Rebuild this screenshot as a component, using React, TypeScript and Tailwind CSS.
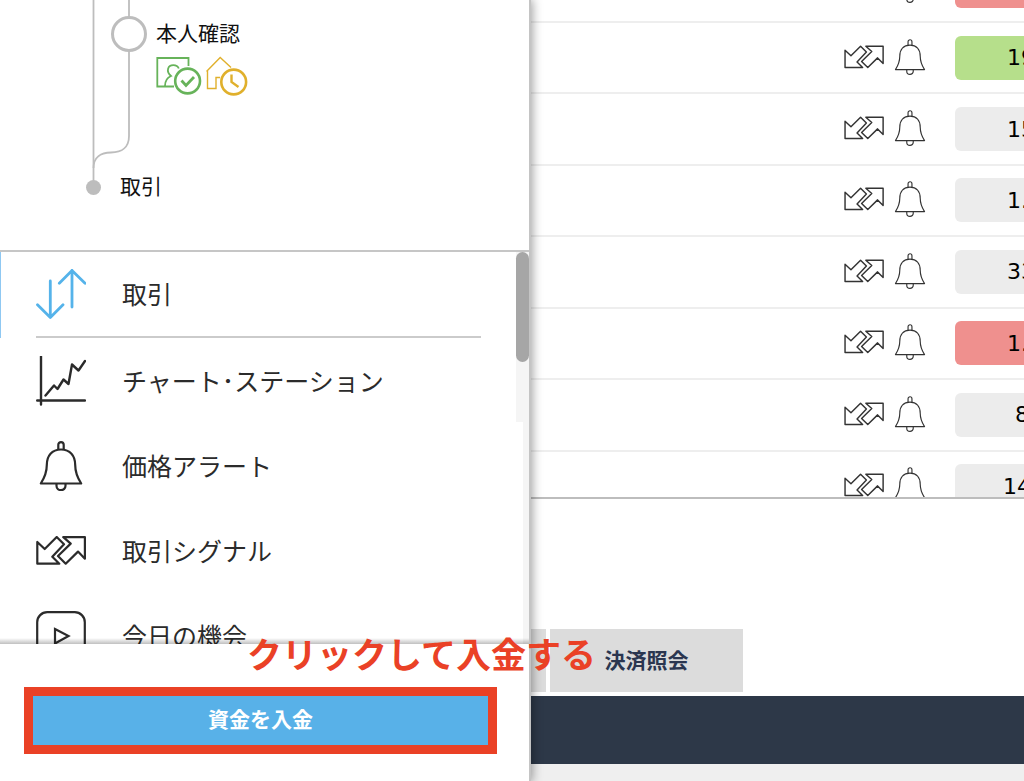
import type { ReactNode } from "react";

type Price = {
  id: number;
  value: string;
  tone: string;
  pad: string;
};

const prices: Price[] = [
  { id: 1, value: "", tone: "bg-[#ef908e]", pad: "pl-[52px]" },
  { id: 2, value: "19", tone: "bg-[#b6df8b]", pad: "pl-[52px]" },
  { id: 3, value: "15", tone: "bg-[#ececec]", pad: "pl-[52px]" },
  { id: 4, value: "1.", tone: "bg-[#ececec]", pad: "pl-[52px]" },
  { id: 5, value: "33", tone: "bg-[#ececec]", pad: "pl-[52px]" },
  { id: 6, value: "1.", tone: "bg-[#ef908e]", pad: "pl-[52px]" },
  { id: 7, value: "8", tone: "bg-[#ececec]", pad: "pl-[60px]" },
  { id: 8, value: "14", tone: "bg-[#ececec]", pad: "pl-12" },
];

function BellIcon({ className, stroke }: { className: string; stroke: number }) {
  return (
    <svg viewBox="0 0 50 50" className={className} fill="none" stroke="currentColor" strokeWidth={stroke} strokeLinejoin="round">
      <path d="M22.3 8.6V3.8a2.7 2.7 0 0 1 5.4 0v4.8" />
      <path d="M4.8 42.5C9 36 10.8 31 10.8 24C10.8 14.500 16 8.500 25 8.500S39.200 14.500 39.200 24C39.200 31 41 36 45.200 42.500Z" />
      <path d="M20.500 42.500v2.200a4.500 4.500 0 0 0 9 0v-2.200" />
    </svg>
  );
}

function SignalIcon({ className, stroke }: { className: string; stroke: number }) {
  return (
    <svg viewBox="0 0 50 29" className={className} fill="none" stroke="currentColor" strokeWidth={stroke} strokeLinejoin="round">
      <path d="M1.3 6V27.700H23.300L16.300 20.700L28 8.300L20.700 1L8.700 13Z" />
      <path d="M27.300 1.100H48.900V22.700L42 15.600L29.700 27.700L22 20L34.700 7.600Z" />
    </svg>
  );
}

function TradeIcon() {
  return (
    <svg viewBox="0 0 50 50" className="h-[50px] w-[50px]" fill="none" stroke="#55b3ea" strokeWidth="2.8" strokeLinecap="round" strokeLinejoin="round">
      <path d="M14.3 12V48.500M1.500 35.700L14.300 48.500L27 35.700" />
      <path d="M36 38V1.500M23.300 14.200L36 1.500L49 14.200" />
    </svg>
  );
}

function ChartIcon() {
  return (
    <svg viewBox="0 0 50 50" className="h-[50px] w-[50px]" fill="none" stroke="currentColor" strokeWidth="2.4" strokeLinecap="round" strokeLinejoin="round">
      <path d="M5 0.500V48.500M1.200 44.500H49" />
      <path d="M9.500 39.500L18 29.500L21.500 33L27.500 23.500L32.500 28L36 8.500L42.500 14.500L49 5" />
    </svg>
  );
}

function PlayIcon() {
  return (
    <svg viewBox="0 0 50 50" className="h-[50px] w-[50px]" fill="none" stroke="currentColor" strokeWidth="2.2">
      <rect x="1.2" y="1.2" width="47.6" height="47.6" rx="10" />
      <path d="M19 18L32.500 25L19 32.500Z" />
    </svg>
  );
}

const menu: { label: string; icon: ReactNode }[] = [
  { label: "取引", icon: <TradeIcon /> },
  { label: "チャート･ステーション", icon: <ChartIcon /> },
  { label: "価格アラート", icon: <BellIcon className="h-[50px] w-[50px]" stroke={2.2} /> },
  { label: "取引シグナル", icon: <SignalIcon className="h-[29px] w-[50px]" stroke={2.2} /> },
  { label: "今日の機会", icon: <PlayIcon /> },
];

function Progress() {
  return (
    <section className="relative h-[252px] shrink-0 border-b-2 border-[#c6c6c6] text-[21px] leading-8">
      <svg viewBox="0 0 150 250" className="absolute top-0 left-0 h-[250px] w-[150px]" fill="none" stroke="#bdbdbd">
        <path strokeWidth="1.8" d="M93.500 0V187" />
        <path strokeWidth="1.8" d="M129 0V136C129 147 122 152.500 111 152.500C101 152.500 93.500 157 93.500 168" />
        <circle cx="129" cy="34" r="16.500" fill="#fff" strokeWidth="3" />
        <circle cx="93.500" cy="187.500" r="7.500" fill="#bdbdbd" stroke="none" />
      </svg>
      <div className="flex h-full flex-col justify-between pt-4 pb-[49px]">
        <div className="pl-[156px]">
          <p>本人確認</p>
          <div className="flex gap-1 pt-1.5">
            <svg viewBox="0 0 46 42" className="h-[42px] w-[46px]" fill="none" stroke="#67b35a" strokeWidth="1.8">
              <path d="M32.500 12V4H1.300V32.500H18" />
              <path d="M9 32C9 26 11.500 23.500 15 22C9.500 17 12 11.200 17.300 11.200C20 11.200 22 12.500 22.800 14.500" />
              <circle cx="31.600" cy="27" r="12.400" strokeWidth="2.6" />
              <path strokeWidth="2.8" d="M25.500 26.500L30 31.500L38 23" />
            </svg>
            <svg viewBox="0 0 44 42" className="h-[42px] w-11" fill="none" stroke="#e0b02c" strokeWidth="1.4">
              <path d="M25 13.500L14.200 3.500L0.500 17.500M1.500 17V34.500H10V23.500H14" />
              <circle cx="27.700" cy="28" r="12.400" strokeWidth="2.6" />
              <path strokeWidth="2.4" d="M25.500 20.500V28L32.500 33" />
            </svg>
          </div>
        </div>
        <p className="pl-[120px]">取引</p>
      </div>
    </section>
  );
}

function Drawer() {
  return (
    <aside className="relative z-10 flex w-[531px] shrink-0 flex-col border-r-2 border-[#c4c4c4] bg-white shadow-[0_0_10px_1px_rgba(0,0,0,0.4)]">
      <Progress />
      <nav className="relative min-h-0 flex-1 overflow-hidden text-[25px] text-[#2b2b2b]">
        {menu.map((item, i) => (
          <a
            key={item.label}
            href="#"
            className={`flex flex-col border-l ${i === 0 ? "border-[#8fc8f2]" : "border-transparent"}`}
          >
            <span className={`flex items-center gap-9 pl-[35px] ${i === 0 ? "h-[84px]" : "h-[85px]"}`}>
              {item.icon}
              {item.label}
            </span>
            {i === 0 && <span className="mr-12 ml-[35px] h-[2px] bg-[#cbcbcb]" />}
          </a>
        ))}
        <div className="absolute inset-y-0 right-0 w-[6px] bg-[#f5f5f5]" />
        <div className="absolute top-0 right-0 h-[170px] w-[13px] bg-[#f5f5f5]" />
        <div className="absolute top-0 right-0 h-[110px] w-[13px] rounded-full bg-[#a6a6a6]" />
        <div className="absolute inset-x-0 bottom-0 h-[6px] bg-linear-to-b from-transparent to-black/25" />
      </nav>
      <div className="relative flex h-[137px] shrink-0 flex-col px-6 pt-[43px]">
        <p className="pointer-events-none absolute top-[-16px] left-[247px] text-[35px] leading-[50px] font-bold whitespace-nowrap text-[#ea4126]">
          クリックして入金する
        </p>
        <button className="mr-2 h-[67px] border-[9px] border-[#ea4126] bg-[#58b1e8] pb-1 text-[21px] font-bold text-white">
          資金を入金
        </button>
      </div>
    </aside>
  );
}

export default function App() {
  return (
    <div className="flex h-screen overflow-hidden bg-white font-['Noto_Sans_CJK_JP',sans-serif] text-[#111]">
      <Drawer />
      <main className="flex min-w-0 flex-1 flex-col overflow-hidden">
        <div className="min-h-0 flex-1 overflow-hidden border-b-2 border-[#bdbdbd]">
          <table className="-mt-12 h-[571px] w-full table-fixed border-collapse">
            <tbody>
              {prices.map((p) => (
                <tr key={p.id} className="border-b-2 border-[#eeeeee]">
                  <td className="p-0">
                    <div className="flex items-center justify-end gap-2 pb-0.5 text-[#333]">
                      <SignalIcon className="h-6 w-10" stroke={1.8} />
                      <BellIcon className="h-9 w-9" stroke={1.6} />
                    </div>
                  </td>
                  <td className="w-[96px] p-0 pl-[27px]">
                    <button
                      className={`block h-[44px] w-[140px] rounded-md text-left font-['DejaVu_Sans',sans-serif] text-[22px] text-black ${p.tone} ${p.pad}`}
                    >
                      {p.value}
                    </button>
                  </td>
                </tr>
              ))}
            </tbody>
          </table>
        </div>
        <div className="flex h-[197px] shrink-0 items-end gap-1 pb-1">
          <button className="h-[63px] w-[15px] bg-[#dcdcdc]" aria-label="タブ" />
          <button className="h-[63px] w-[193px] bg-[#dcdcdc] pb-0.5 text-[21px] font-bold text-[#2b3650]">決済照会</button>
        </div>
        <div className="h-[68px] shrink-0 bg-[#2d3848]" />
        <div className="h-[17px] shrink-0 bg-[#efefef]" />
      </main>
    </div>
  );
}
